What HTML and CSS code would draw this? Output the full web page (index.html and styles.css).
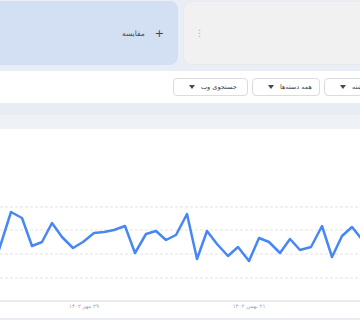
FILE: index.html
```html
<!DOCTYPE html>
<html lang="fa" dir="rtl">
<head>
    <meta charset="UTF-8">
    <title>روند جستجو</title>
<link rel="stylesheet" href="styles.css">
</head>
<body>
<div class="page">
    <div class="terms">
        <div class="card term"><span class="menu">⋮</span></div>
        <div class="card compare"><span class="plus">+</span><span class="compare-text">مقایسه</span></div>
    </div>

    <div class="filters">
        <div class="filter-row">
            <div class="filter f-time"><span>۱۲ ماه گذشته</span><i class="caret"></i></div>
            <div class="filter f-cat"><span>همه دسته‌ها</span><i class="caret"></i></div>
            <div class="filter f-type"><span>جستجوی وب</span><i class="caret"></i></div>
        </div>
    </div>

    <div class="band"></div>

    <div class="chart">
        <svg class="plot" width="360" height="173" viewBox="0 129 360 173">
            <g class="grid">
                <line x1="0" y1="207" x2="360" y2="207"/>
                <line x1="0" y1="230" x2="360" y2="230"/>
                <line x1="0" y1="254" x2="360" y2="254"/>
                <line x1="0" y1="278" x2="360" y2="278"/>
            </g>
            <line class="axis" x1="0" y1="301" x2="360" y2="301"/>
            <polyline class="trend" points="-2,253 11,212 22,218 32,246 42,242 52,223 62,237 73,248 83,242 94,233 104,232 114,230 125,226 135,253 146,234 156,231 166,240 176,235 187,214 197,259 207,231 217,244 228,256 238,247 249,261 259,238 269,242 280,253 290,239 300,250 311,247 322,226 332,257 342,236 352,227 364,242"/>
        </svg>
        <div class="axis-labels">
            <span class="tick">۲۹ مهر ۱۴۰۲</span>
            <span class="tick">۲۱ بهمن ۱۴۰۲</span>
        </div>
    </div>
</div>
</body>
</html>
```

FILE: styles.css
```css
body{
    margin: 0;
    background: #e9eef6;
    font-family: "DejaVu Sans", "Liberation Sans", sans-serif;
    color: #3c4043;
}

.page{
    width: 360px;
    height: 320px;
    overflow: hidden;
}

/* کارت‌های عبارت */
.terms{
    display: flex;
    gap: 5px;
    height: 64px;
    padding-top: 1px;
    margin-right: -13px;
}

.card{
    width: 190px;
    flex: none;
    border-radius: 8px;
    box-sizing: border-box;
    display: flex;
    align-items: center;
}

.term{
    background: #f1f1f2;
    border: 1px solid #e8e9eb;
    justify-content: flex-end;
    padding-left: 11px;
}

.menu{
    color: #b0b0b0;
    font-size: 9px;
    line-height: 1;
}

.compare{
    background: #d3e0f3;
    padding-right: 14px;
    gap: 10px;
    font-size: 7.5px;
    color: #4a4d52;
}

.plus{
    font-size: 11px;
    line-height: 1;
    color: #444;
}

/* فیلترها */
.filters{
    margin-top: 6px;
    height: 32px;
    background: #fff;
    overflow: hidden;
}

.filter-row{
    display: flex;
    gap: 4px;
    height: 100%;
    align-items: center;
    margin-right: -54px;
}

.filter{
    flex: none;
    height: 18px;
    box-sizing: border-box;
    border: 1px solid #dadce0;
    border-radius: 4px;
    background: #fff;
    display: flex;
    align-items: center;
    justify-content: flex-end;
    gap: 6px;
    padding: 0 15px;
    font-size: 6.5px;
    color: #3c4043;
    white-space: nowrap;
    overflow: hidden;
}

.f-time{ width: 90px; }
.f-cat{ width: 68px; }
.f-type{ width: 75px; }

.caret{
    flex: none;
    width: 0;
    height: 0;
    border-left: 3px solid transparent;
    border-right: 3px solid transparent;
    border-top: 4px solid #4a4a4a;
}

.band{
    height: 26px;
    background: linear-gradient(#e7ecf5 0, #e7ecf5 12px, #eef1f6 12px);
}

/* نمودار */
.chart{
    height: 189px;
    background: #fff;
}

.plot{
    display: block;
}

.grid line{
    stroke: #e3e3e3;
    stroke-width: 1;
    stroke-dasharray: 3 2;
}

.axis{
    stroke: #d6d6d6;
    stroke-width: 1;
}

.trend{
    fill: none;
    stroke: #4787f4;
    stroke-width: 2.5;
    stroke-linejoin: round;
}

.axis-labels{
    direction: ltr;
    display: flex;
    padding-left: 54px;
}

.tick{
    direction: rtl;
    width: 60px;
    text-align: center;
    font-size: 5.5px;
    color: #9aa0a6;
    line-height: 9px;
}

.tick + .tick{
    margin-left: 105px;
}
```
